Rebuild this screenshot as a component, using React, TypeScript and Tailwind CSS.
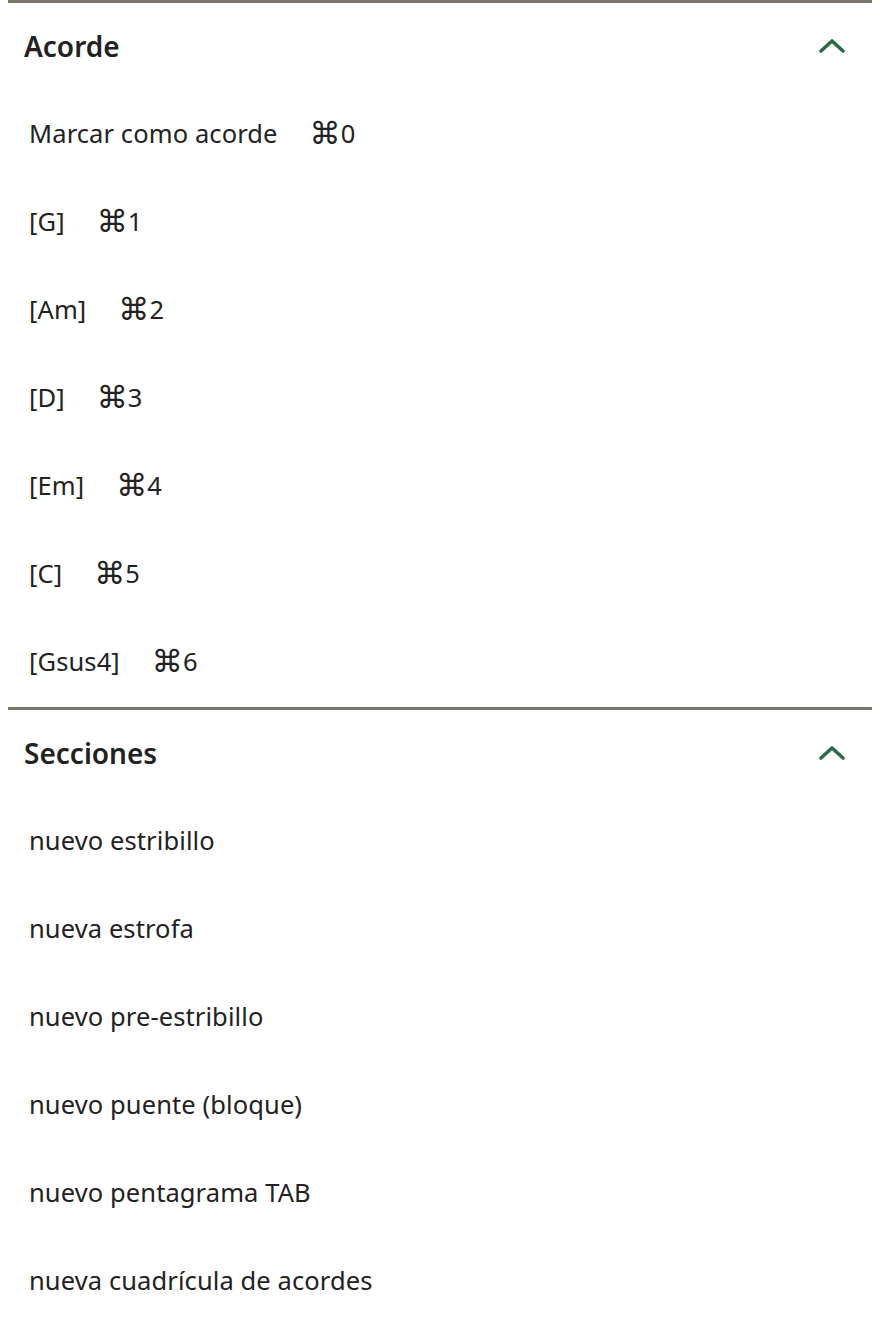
import type { ReactNode } from "react"

const chords = [
  { label: "[G]", key: "1" },
  { label: "[Am]", key: "2" },
  { label: "[D]", key: "3" },
  { label: "[Em]", key: "4" },
  { label: "[C]", key: "5" },
  { label: "[Gsus4]", key: "6" },
]

const sections = [
  "nuevo estribillo",
  "nueva estrofa",
  "nuevo pre-estribillo",
  "nuevo puente (bloque)",
  "nuevo pentagrama TAB",
  "nueva cuadrícula de acordes",
]

function Chevron() {
  return (
    <svg width="28" height="18" viewBox="0 0 28 18" fill="none" aria-hidden="true">
      <polyline
        points="3,14 14,4 25,14"
        stroke="#2b6a4b"
        strokeWidth="3.6"
        strokeLinecap="round"
        strokeLinejoin="round"
      />
    </svg>
  )
}

function Panel({ title, children }: { title: string; children: ReactNode }) {
  return (
    <section className="border-t-[3px] border-[#7b776d]">
      <button
        type="button"
        className="flex h-[86px] w-full items-center justify-between pl-4 pr-[26px] text-left"
      >
        <span className="text-[28px] font-[560] text-[#222]">{title}</span>
        <Chevron />
      </button>
      <ul className="pb-[2px]">{children}</ul>
    </section>
  )
}

function Item({ children }: { children: ReactNode }) {
  return (
    <li className="flex h-[88px] items-center pl-[21px] text-[25.5px] tracking-[0.1px] text-[#222]">
      {children}
    </li>
  )
}

function Shortcut({ k }: { k: string }) {
  return (
    <span className="ml-[32px] flex items-center">
      <span className="font-['DejaVu_Sans',sans-serif] text-[31px] leading-none">⌘</span>
      <span>{k}</span>
    </span>
  )
}

export default function App() {
  return (
    <div className="min-h-screen bg-white px-2 font-['Noto_Sans','DejaVu_Sans',sans-serif]">
      <Panel title="Acorde">
        <Item>
          Marcar como acorde
          <Shortcut k="0" />
        </Item>
        {chords.map((c) => (
          <Item key={c.key}>
            {c.label}
            <Shortcut k={c.key} />
          </Item>
        ))}
      </Panel>
      <Panel title="Secciones">
        {sections.map((s) => (
          <Item key={s}>{s}</Item>
        ))}
      </Panel>
    </div>
  )
}
